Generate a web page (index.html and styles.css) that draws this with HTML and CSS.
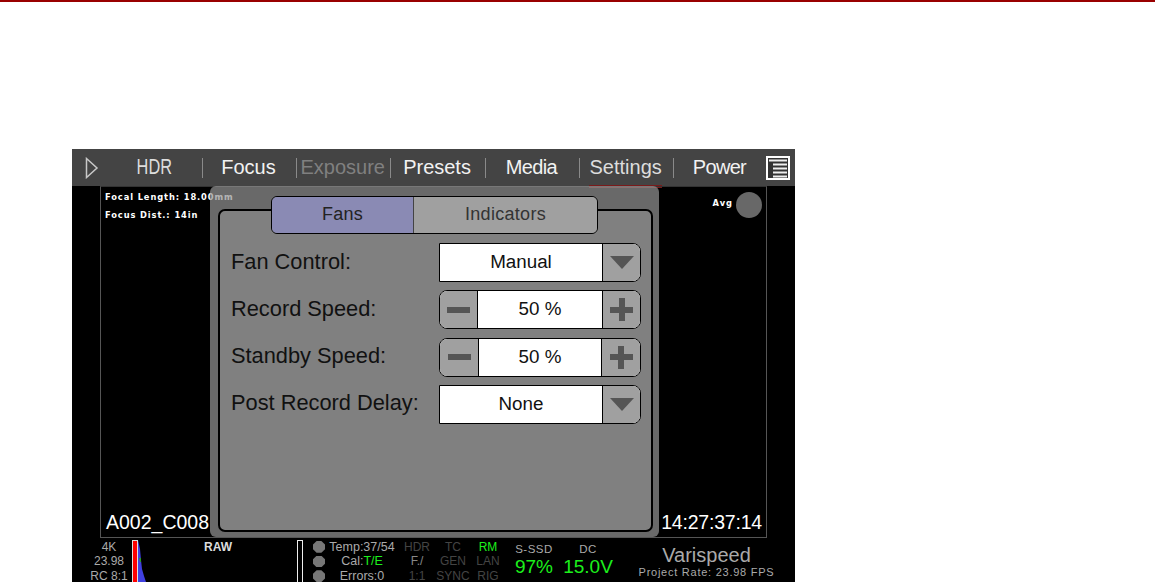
FILE: index.html
```html
<!DOCTYPE html>
<html lang="en">
<head>
<meta charset="utf-8">
<title>Settings - Fans</title>
<link rel="stylesheet" href="styles.css">
</head>
<body>
<div class="rule"></div>
<main class="screen">
  <nav class="nav">
    <div class="nav-play">
      <svg width="14" height="22" viewBox="0 0 14 22"><path d="M1.500 1.500 L12 11 L1.500 20.500 Z" fill="none" stroke="#c8c8c8" stroke-width="1.500"/></svg>
    </div>
    <div class="nav-item"><span class="nav-narrow">HDR</span></div>
    <div class="nav-item">Focus</div>
    <div class="nav-item nav-off">Exposure</div>
    <div class="nav-item">Presets</div>
    <div class="nav-item nav-tight">Media</div>
    <div class="nav-item nav-active">Settings</div>
    <div class="nav-item nav-tight nav-last">Power</div>
    <div class="nav-menu">
      <svg width="24" height="24" viewBox="0 0 24 24"><rect x="1" y="1" width="22" height="22" fill="#333" stroke="#fff" stroke-width="2"/><path d="M3 4.500H21M7 8.500H21M7 12.500H21M7 16.500H21M7 20.500H21" stroke="#eee" stroke-width="2"/></svg>
    </div>
  </nav>
  <section class="stage">
    <div class="frame">
      <div class="frame-top">
        <div class="meta">
          <div>Focal Length: 18.00mm</div>
          <div>Focus Dist.: 14in</div>
        </div>
        <div class="avg"><span class="avg-text">Avg</span><i class="avg-dot"></i></div>
      </div>
      <div class="frame-bottom">
        <span>A002_C008</span>
        <span class="timecode">14:27:37:14</span>
      </div>
    </div>
    <div class="panel">
      <div class="tabs">
        <div class="tab tab-on">Fans</div>
        <div class="tab">Indicators</div>
      </div>
      <div class="sheet">
        <div class="field">
          <label class="field-label">Fan Control:</label>
          <div class="control">
            <div class="value value-select">Manual</div>
            <div class="cap cap-end"><i class="tri"></i></div>
          </div>
        </div>
        <div class="field">
          <label class="field-label">Record Speed:</label>
          <div class="control control-step">
            <div class="cap cap-start"><i class="minus"></i></div>
            <div class="value">50 %</div>
            <div class="cap cap-end"><i class="plus"></i></div>
          </div>
        </div>
        <div class="field">
          <label class="field-label">Standby Speed:</label>
          <div class="control control-step">
            <div class="cap cap-start cap-wide"><i class="minus"></i></div>
            <div class="value">50 %</div>
            <div class="cap cap-end cap-wide"><i class="plus"></i></div>
          </div>
        </div>
        <div class="field">
          <label class="field-label">Post Record Delay:</label>
          <div class="control">
            <div class="value value-select">None</div>
            <div class="cap cap-end"><i class="tri"></i></div>
          </div>
        </div>
      </div>
    </div>
  </section>
  <footer class="status">
    <div class="col col-format"><div>4K</div><div>23.98</div><div>RC 8:1</div></div>
    <div class="hist">
      <svg class="hist-plot" width="176" height="44" viewBox="0 0 176 44">
        <rect x="2.500" y="2.500" width="5" height="42" fill="#f00" stroke="#ddd"/>
        <path d="M8 2 L10 11 L11 22 L12 31 L14 38 L16 44 L8 44 Z" fill="#4040e0"/>
        <path d="M9 20 L11 20 L11 24 L10 24 Z" fill="#2a9a2a"/>
        <rect x="167.500" y="2.500" width="5" height="42" fill="none" stroke="#eee"/>
      </svg>
      <span class="hist-label">RAW</span>
    </div>
    <div class="dots"><i></i><i></i><i></i></div>
    <div class="col col-temp"><div>Temp:37/54</div><div>Cal:<b class="green">T/E</b></div><div>Errors:0</div></div>
    <div class="col col-flag dim"><div>HDR</div><div class="lit">F./</div><div>1:1</div></div>
    <div class="col col-flag dim"><div>TC</div><div>GEN</div><div>SYNC</div></div>
    <div class="col col-flag col-rm dim"><div class="green">RM</div><div>LAN</div><div>RIG</div></div>
    <div class="gauge gauge-ssd"><div class="gauge-name">S-SSD</div><div class="gauge-val">97%</div></div>
    <div class="gauge gauge-dc"><div class="gauge-name">DC</div><div class="gauge-val">15.0V</div></div>
    <div class="mode"><div class="mode-name">Varispeed</div><div class="mode-rate">Project Rate: 23.98 FPS</div></div>
  </footer>
</main>
</body>
</html>
```
FILE: styles.css
```css
* { box-sizing: border-box; }
html, body { margin: 0; padding: 0; background: #fff; }
body { width: 1155px; height: 582px; overflow: hidden; font-family: "Liberation Sans", Arial, sans-serif; }
.rule { height: 2px; background: #990000; }
.screen { width: 723px; height: 433px; margin: 147px 0 0 72px; background: #000; display: flex; flex-direction: column; overflow: hidden; }

.nav { flex: none; height: 37px; background: #444; display: flex; align-items: center; position: relative; }
.nav-play { width: 36.500px; padding-left: 13px; display: flex; }
.nav-item { width: 94.300px; height: 20px; line-height: 18px; font-size: 20px; color: #f2f2f2; text-align: center; border-right: 1px solid #8a8a8a; padding-right: 2px; position: relative; white-space: nowrap; }
.nav-narrow { display: inline-block; transform: scaleX(.76); font-size: 21.500px; color: #ddd; margin-left: 1px; }
.nav-off { color: #808080; }
.nav-tight { letter-spacing: -.7px; }
.nav-last { border-right: 0; padding-right: 4px; }
.nav-active { color: #ddd; }
.nav-active::after { content: ""; position: absolute; left: 9px; right: 11px; top: 27px; height: 3px; background: #7b1a1a; }
.nav-menu { display: flex; margin-left: -2.600px; }

.stage { flex: none; height: 352px; position: relative; padding-left: 28px; }
.frame { width: 667px; height: 352px; border: 1px solid #555; border-top-color: #333; display: flex; flex-direction: column; justify-content: space-between; padding: 5px 4px 3px 4px; }
.frame-top { display: flex; justify-content: space-between; color: #fff; }
.meta { font-family: "DejaVu Sans", sans-serif; font-weight: bold; font-size: 8.300px; letter-spacing: .9px; line-height: 18px; margin-top: -4px; }
.avg { display: flex; align-items: center; font-family: "DejaVu Sans", sans-serif; font-weight: bold; font-size: 8.300px; letter-spacing: 1px; gap: 3px; height: 26px; }
.avg-text { margin-top: -4px; }
.avg-dot { width: 26px; height: 26px; border-radius: 50%; background: #686868; display: block; }
.frame-bottom { display: flex; justify-content: space-between; color: #fff; font-size: 19.500px; line-height: 24px; padding: 0 0 0 1px; }
.timecode { letter-spacing: -.2px; }

.panel { position: absolute; left: 138px; top: 0; width: 449px; height: 351px; background: rgba(150, 150, 150, .7); border-radius: 6px; padding: 10px 6px 6px 8px; }
.tabs { position: relative; z-index: 1; display: flex; width: 327px; height: 38px; margin-left: 53px; border: 1.500px solid #000; border-radius: 6px; overflow: hidden; }
.tab { font-size: 18px; color: #333; text-align: center; line-height: 35px; background: #a0a0a0; flex: 1 1 184px; letter-spacing: .3px; }
.tab-on { background: #8a8ab4; flex: 0 0 142px; border-right: 1px solid #444; color: #222; }
.sheet { height: 323px; margin-top: -25px; background: #808080; border: 2px solid #000; border-radius: 7px; padding: 32px 10px 0 11px; display: flex; flex-direction: column; gap: 8.330px; }
.field { display: flex; justify-content: space-between; align-items: center; height: 39px; }
.field-label { font-size: 21.800px; color: #111; margin-top: -2px; }
.control { width: 202px; height: 39px; display: flex; border: 1.500px solid #000; border-radius: 0 8px 8px 0; overflow: hidden; background: #fff; }
.control-step { border-radius: 8px; }
.value { flex: 1; background: #fff; font-size: 18.800px; line-height: 35px; text-align: center; color: #111; }
.cap { flex: none; width: 38px; background: #a0a0a0; display: flex; align-items: center; justify-content: center; }
.cap-start { border-right: 1px solid #000; }
.cap-end { border-left: 1px solid #000; }
.cap-wide { width: 39px; }
.tri { display: block; width: 0; height: 0; border-left: 12px solid transparent; border-right: 12px solid transparent; border-top: 13px solid #555; }
.minus { display: block; width: 23px; height: 6px; background: #555; }
.plus { display: block; width: 23px; height: 23px; background: linear-gradient(#555, #555) center / 23px 6px no-repeat, linear-gradient(#555, #555) center / 6px 23px no-repeat; }

.status { flex: none; height: 44px; display: flex; color: #aaa; font-size: 12px; line-height: 14.300px; }
.col { flex: none; text-align: center; padding-top: 2px; white-space: nowrap; }
.col-format { width: 42px; margin-left: 16px; }
.hist { flex: none; width: 176px; position: relative; text-align: center; padding-top: 2px; }
.hist-plot { position: absolute; left: 0; top: 0; }
.hist-label { position: relative; color: #ddd; font-weight: bold; font-size: 12px; }
.dots { flex: none; width: 19px; padding: 3px 0 0 7px; display: flex; flex-direction: column; gap: 3px; }
.dots i { display: block; width: 12px; height: 12px; background: #777; clip-path: polygon(30% 0, 70% 0, 100% 30%, 100% 70%, 70% 100%, 30% 100%, 0 70%, 0 30%); }
.col-temp { width: 74px; font-size: 12.500px; }
.col-flag { width: 36px; }
.col-rm { width: 34px; }
.dim { color: #444; }
.lit { color: #888; }
.green { color: #1cf01c; font-weight: normal; }
.gauge { flex: none; text-align: center; padding-top: 4px; }
.gauge-ssd { width: 58px; }
.gauge-dc { width: 50px; }
.gauge-name { font-size: 11.500px; line-height: 14px; letter-spacing: .5px; }
.gauge-val { color: #1cf01c; font-size: 19px; line-height: 22px; }
.mode { flex: none; width: 186px; padding-left: 1px; text-align: center; }
.mode-name { font-size: 20px; line-height: 22px; color: #aaa; margin-top: 6px; }
.mode-rate { font-size: 11px; line-height: 13px; color: #aaa; letter-spacing: .75px; white-space: nowrap; }
```
